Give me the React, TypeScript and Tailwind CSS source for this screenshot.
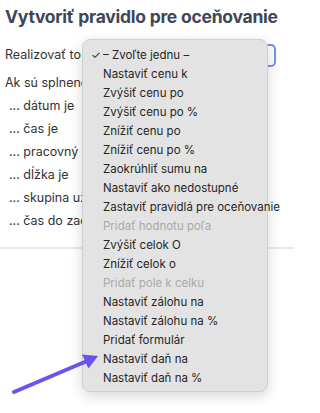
import React from "react";

type MenuItem = { label: string; disabled?: boolean; checked?: boolean };

const items: MenuItem[] = [
  { label: "– Zvoľte jednu –", checked: true },
  { label: "Nastaviť cenu k" },
  { label: "Zvýšiť cenu po" },
  { label: "Zvýšiť cenu po %" },
  { label: "Znížiť cenu po" },
  { label: "Znížiť cenu po %" },
  { label: "Zaokrúhliť sumu na" },
  { label: "Nastaviť ako nedostupné" },
  { label: "Zastaviť pravidlá pre oceňovanie" },
  { label: "Pridať hodnotu poľa", disabled: true },
  { label: "Zvýšiť celok O" },
  { label: "Znížiť celok o" },
  { label: "Pridať pole k celku", disabled: true },
  { label: "Nastaviť zálohu na" },
  { label: "Nastaviť zálohu na %" },
  { label: "Pridať formulár" },
  { label: "Nastaviť daň na" },
  { label: "Nastaviť daň na %" },
];

// the menu covers the rest of these lines
const conditions = [
  "... dátum je",
  "... čas je",
  "... pracovný d",
  "... dĺžka je",
  "... skupina už",
  "... čas do zač",
];

export default function App() {
  return (
    <div className="relative w-[294px] h-[413px] overflow-hidden bg-white font-['Inter','Noto_Sans',sans-serif]">
      <div className="pt-[6px] px-[5px]">
        <h1 className="text-[17.5px] leading-[22px] font-bold text-[#3d4759] tracking-[-0.25px] whitespace-nowrap">
          Vytvoriť pravidlo pre oceňovanie
        </h1>

        <div className="mt-[15px] flex items-center h-[24px]">
          <span className="w-[76px] overflow-hidden text-[12.5px] text-[#333] whitespace-nowrap">Realizovať tot</span>
          <div className="ml-[20px] mr-[13px] flex-1 h-[23px] rounded-[5px] border-2 border-[#7095e6] bg-white" />
        </div>

        <div className="mt-[5px] w-[77px] overflow-hidden text-[12.5px] text-[#333]">
          <div className="h-[23px] flex items-center whitespace-nowrap">Ak sú splnené</div>
          {conditions.map((c) => (
            <div key={c} className="h-[23px] flex items-center pl-[4px] whitespace-nowrap">
              {c}
            </div>
          ))}
        </div>
      </div>

      <div className="mt-[14px] h-[2px] bg-[#e9e9e9]" />

      {/* open select menu */}
      <div className="absolute left-[82px] top-[39px] w-[186px] h-[353px] rounded-[8px] bg-[#e3e3e3] border border-[#d0d0d0] shadow-[0_4px_14px_rgba(0,0,0,0.16)] pt-[6px]">
        {items.map((it) => (
          <div
            key={it.label}
            className={
              "relative h-[19px] flex items-center pl-[20px] text-[11.5px] whitespace-nowrap " +
              (it.disabled ? "text-[#aaaaaa]" : "text-[#262626]")
            }
          >
            {it.checked && (
              <span className="absolute left-[8px] text-[11px] text-[#262626]">✓</span>
            )}
            {it.label}
          </div>
        ))}
      </div>

      {/* annotation arrow */}
      <svg className="absolute left-0 top-0" width="294" height="413" viewBox="0 0 294 413">
        <line x1="14" y1="392" x2="87" y2="361" stroke="#6a52ef" strokeWidth="4" strokeLinecap="round" />
        <polygon points="98,356 88.5,368.5 82,354.5" fill="#6a52ef" />
      </svg>
    </div>
  );
}
